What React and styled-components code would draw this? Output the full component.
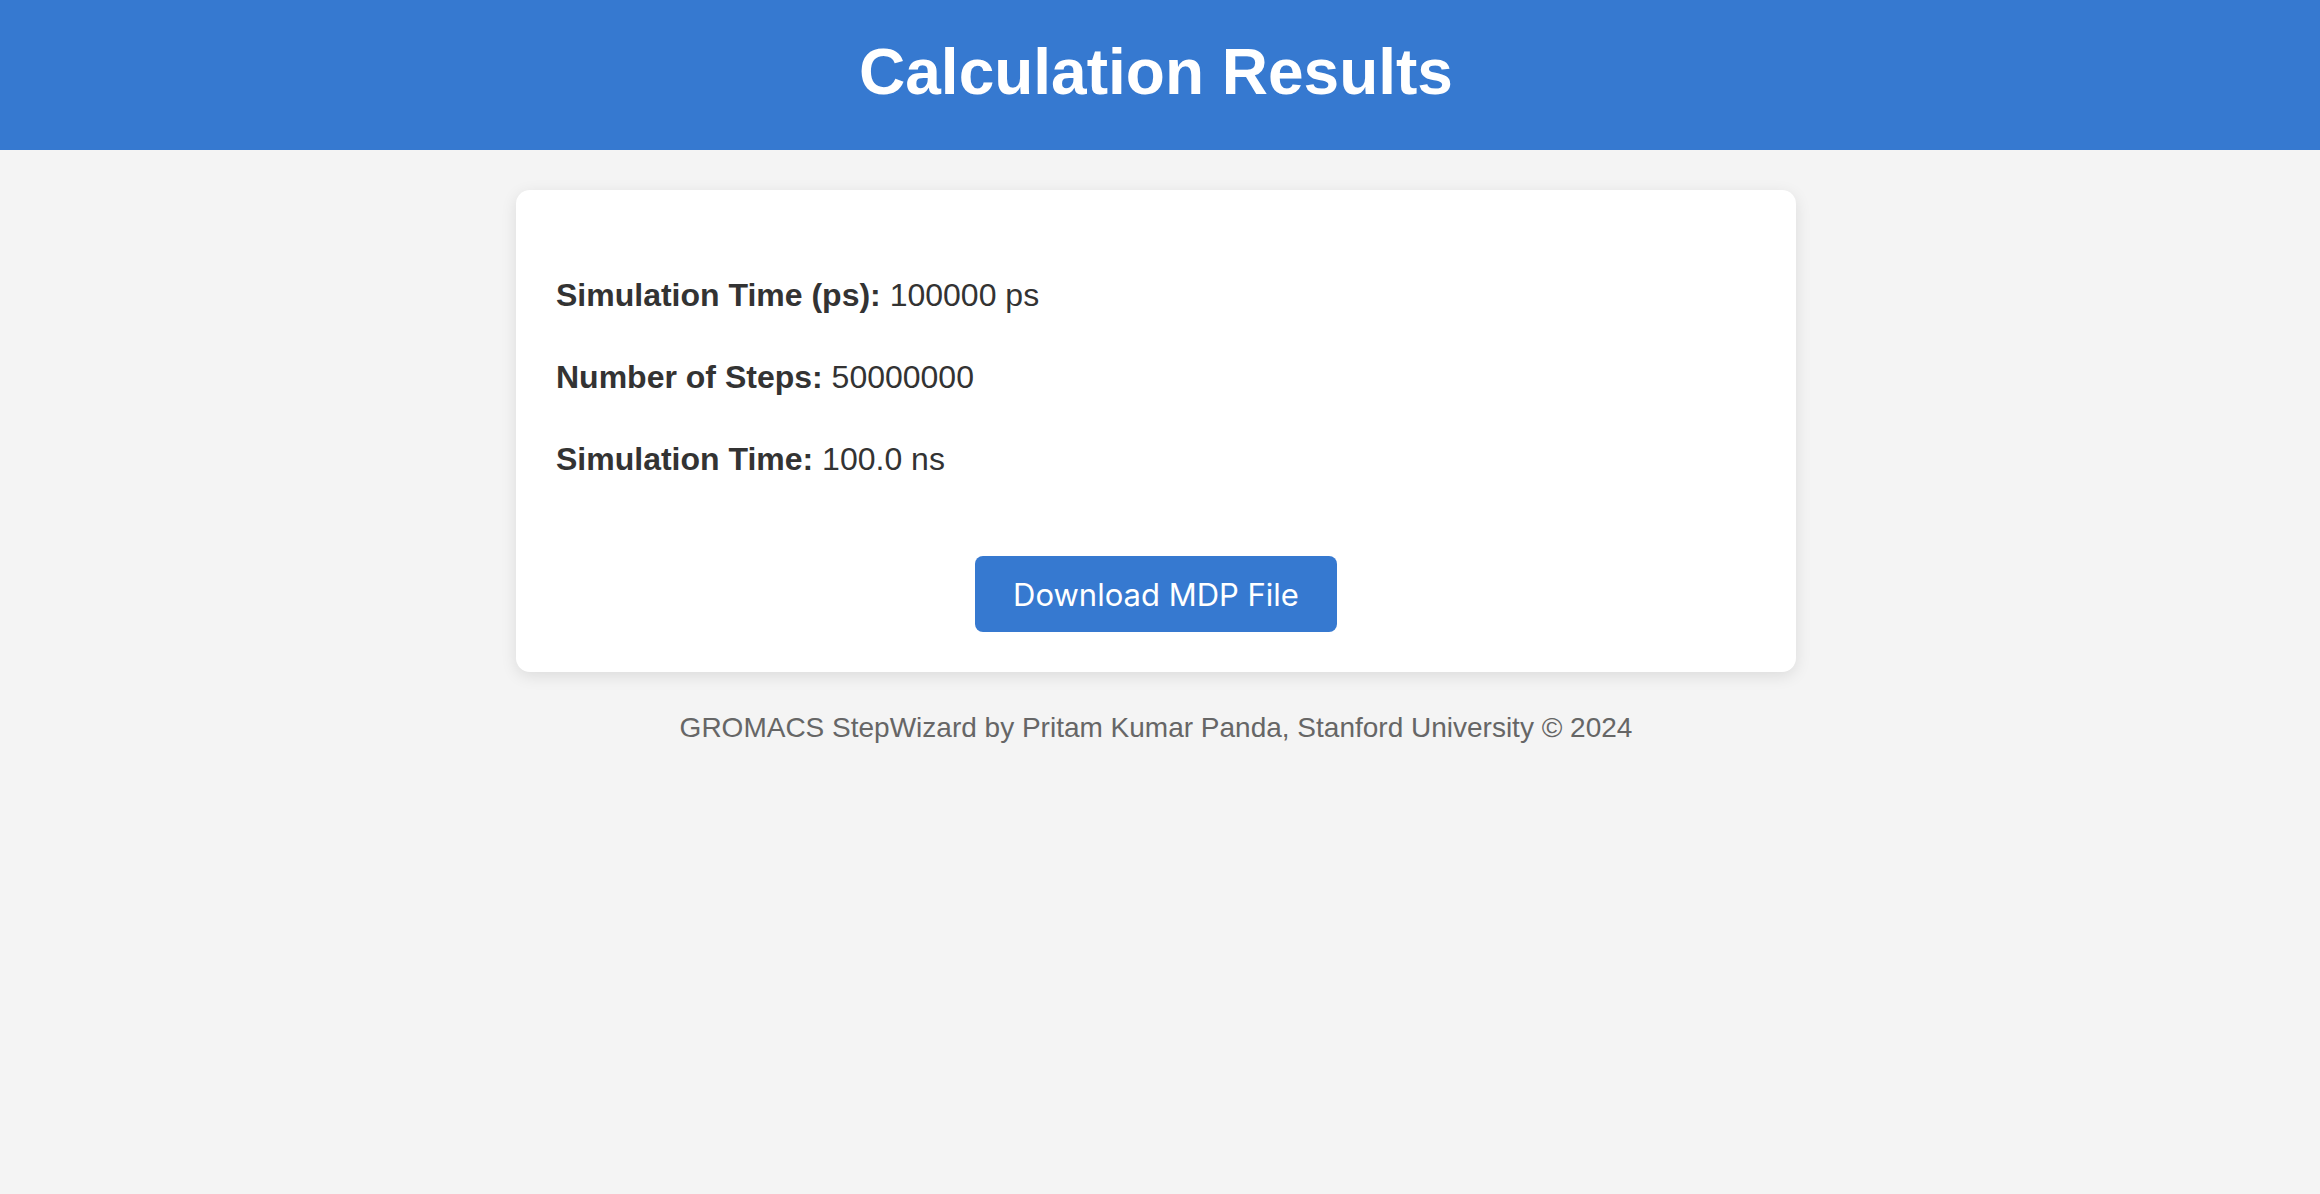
import React from "react";
import styled, { createGlobalStyle } from "styled-components";

const GlobalStyle = createGlobalStyle`
  html, body {
    margin: 0;
    padding: 0;
    background: #f4f4f4;
  }
  body {
    font-family: "Liberation Sans", Arial, sans-serif;
    color: #333;
  }
`;

const Header = styled.header`
  background: #3679d0;
  color: #fff;
  height: 150px;
  box-sizing: border-box;
  padding: 35px 8px 0 0;
  text-align: center;
`;

const Title = styled.h1`
  margin: 0;
  font-size: 64px;
  line-height: 74px;
  font-weight: 700;
`;

const Main = styled.main`
  padding: 40px 8px 0 0;
  display: flex;
  flex-direction: column;
  align-items: center;
`;

const Card = styled.section`
  width: 1280px;
  box-sizing: border-box;
  background: #fff;
  border-radius: 14px;
  box-shadow: 0 4px 16px rgba(0, 0, 0, 0.1);
  padding: 40px;
  display: flex;
  flex-direction: column;
  align-items: stretch;
`;

const Results = styled.div`
  padding-top: 40px;
  display: flex;
  flex-direction: column;
  gap: 32px;
`;

const Row = styled.p`
  margin: 0;
  font-size: 32px;
  line-height: 50px;
  color: #333;
`;

const Label = styled.strong`
  font-weight: 700;
`;

const Button = styled.button`
  align-self: center;
  margin-top: 72px;
  height: 76px;
  padding: 0 38px;
  border: none;
  border-radius: 8px;
  background: #3679d0;
  color: #fff;
  font-family: Inter, "Noto Sans", sans-serif;
  font-size: 31px;
  cursor: pointer;
`;

const Footer = styled.footer`
  margin-top: 40px;
  font-size: 28px;
  color: #666;
  text-align: center;
`;

const results = [
  { label: "Simulation Time (ps):", value: "100000 ps" },
  { label: "Number of Steps:", value: "50000000" },
  { label: "Simulation Time:", value: "100.0 ns" },
];

export default function App() {
  return (
    <>
      <GlobalStyle />
      <Header>
        <Title>Calculation Results</Title>
      </Header>
      <Main>
        <Card>
          <Results>
            {results.map((r) => (
              <Row key={r.label}>
                <Label>{r.label}</Label> {r.value}
              </Row>
            ))}
          </Results>
          <Button>Download MDP File</Button>
        </Card>
        <Footer>GROMACS StepWizard by Pritam Kumar Panda, Stanford University © 2024</Footer>
      </Main>
    </>
  );
}
